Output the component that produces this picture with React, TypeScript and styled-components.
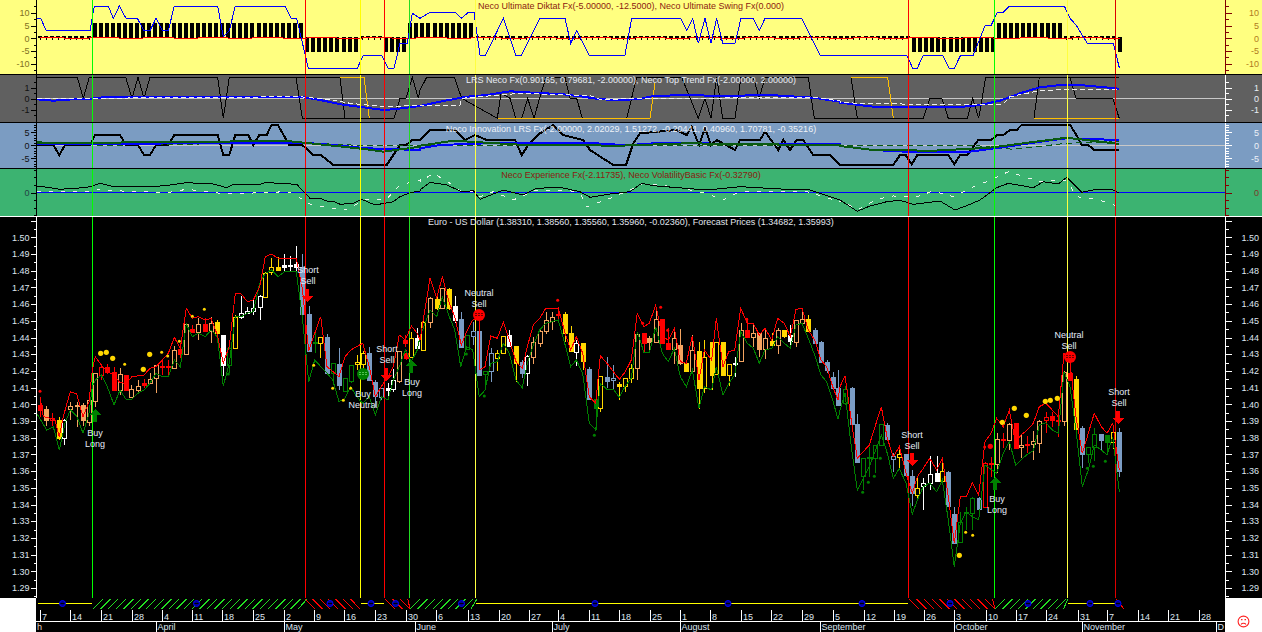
import React from "react"
import styled, { createGlobalStyle } from "styled-components"

type Pt = [number, number]
type Tick = { y: number; major?: boolean; label?: string }

const GlobalStyle = createGlobalStyle`
  html, body {
    margin: 0;
    padding: 0;
    background: #000;
    overflow: hidden;
  }
  text {
    font-family: "Liberation Sans", Arial, sans-serif;
    font-size: 9px;
  }
`

const Page = styled.div`
  display: flex;
  flex-direction: column;
  width: 1262px;
  height: 632px;
  overflow: hidden;
  font-family: "Liberation Sans", Arial, sans-serif;
`

const PaneRow = styled.section<{ $h: number; $bg: string; $edge?: string }>`
  display: flex;
  flex: none;
  box-sizing: border-box;
  height: ${(p) => p.$h + (p.$edge ? 1 : 0)}px;
  background: ${(p) => p.$bg};
  border-bottom: ${(p) => (p.$edge ? `1px solid ${p.$edge}` : "none")};
`

const AxisSvg = styled.svg`
  display: block;
  flex: none;
  width: 37px;
  height: 100%;
`

const PlotArea = styled.div`
  position: relative;
  flex: 1;
  min-width: 0;
`

const PlotSvg = styled.svg`
  display: block;
  width: 100%;
  height: 100%;
  shape-rendering: crispEdges;
`

const PaneTitle = styled.div<{ $color: string; $top: number }>`
  position: absolute;
  top: ${(p) => p.$top}px;
  left: 0;
  right: 0;
  text-align: center;
  font-size: 9px;
  line-height: 11px;
  white-space: nowrap;
  color: ${(p) => p.$color};
`

const BottomRow = styled.footer`
  display: flex;
  flex: none;
  height: 34px;
  background: #000;
`

const Corner = styled.div<{ $w: number }>`
  display: flex;
  flex: none;
  align-items: flex-end;
  justify-content: center;
  box-sizing: border-box;
  width: ${(p) => p.$w}px;
  padding-bottom: 4px;
  background: #fff;
`

const TimeStrip = styled.svg`
  display: block;
  flex: 1;
  min-width: 0;
  height: 100%;
`

const C = {
  r: "#ff0000",
  o: "#f4a460",
  y: "#ffd700",
  w: "#ffffff",
  s: "#7b9cc4",
  g: "#008000",
}

// everything below was traced off 3x crops, so points go through here
const traced = (ox: number, oy: number, pts: Pt[]): Pt[] =>
  pts.map(([x, y]) => [ox + x / 3, oy + y / 3])

const toPoints = (pts: Pt[]) =>
  pts.map(([x, y]) => `${x.toFixed(1)},${y.toFixed(1)}`).join(" ")

const Trace = ({ pts, color, w = 1, dash }: { pts: Pt[]; color: string; w?: number; dash?: string }) => (
  <polyline points={toPoints(pts)} fill="none" stroke={color} strokeWidth={w} strokeDasharray={dash} />
)

const SIGNALS: [number, string][] = [
  [92, "#00ff00"],
  [305, "#ff0000"],
  [360, "#ffff00"],
  [384, "#ff0000"],
  [409, "#22dd22"],
  [475, "#ffff40"],
  [908, "#ff0000"],
  [994, "#00ff00"],
  [1067, "#ffff40"],
  [1115, "#dd0000"],
]

const SignalLines = ({ top, height }: { top: number; height: number }) => (
  <>
    {SIGNALS.map(([x, color]) => (
      <line key={x} x1={x + 0.5} x2={x + 0.5} y1={top} y2={top + height} stroke={color} />
    ))}
  </>
)

const Axis = ({
  side,
  top,
  height,
  ticks,
  lineColor,
  labelColor,
}: {
  side: "left" | "right"
  top: number
  height: number
  ticks: Tick[]
  lineColor: string
  labelColor: string
}) => {
  const left = side === "left"
  const lineX = left ? 36.5 : 1225.5
  const origin = left ? 0 : 1225
  return (
    <AxisSvg viewBox={`${origin} ${top} 37 ${height}`}>
      <line x1={lineX} x2={lineX} y1={top} y2={top + height} stroke={lineColor} shapeRendering="crispEdges" />
      {ticks.map((t) => {
        const len = t.major ? 6 : 3
        const y = Math.round(t.y) + 0.5
        return (
          <React.Fragment key={t.y}>
            <line
              x1={lineX}
              x2={left ? lineX - len : lineX + len}
              y1={y}
              y2={y}
              stroke={lineColor}
              shapeRendering="crispEdges"
            />
            {t.label && (
              <text x={left ? 29.5 : 1259} y={t.y + 3.2} textAnchor="end" fill={labelColor}>
                {t.label}
              </text>
            )}
          </React.Fragment>
        )
      })}
    </AxisSvg>
  )
}

const buildTicks = (zero: number, perUnit: number, step: number, min: number, max: number, majorEvery: number, labelEvery: number, fmt = (v: number) => String(v)) => {
  const out: Tick[] = []
  const steps = Math.round((max - min) / step)
  for (let i = 0; i <= steps; i++) {
    const v = +(min + i * step).toFixed(4)
    const isMajor = Math.abs(v / majorEvery - Math.round(v / majorEvery)) < 1e-6
    const isLabel = labelEvery > 0 && Math.abs(v / labelEvery - Math.round(v / labelEvery)) < 1e-6
    out.push({ y: zero - v * perUnit, major: isMajor, label: isLabel ? fmt(v) : undefined })
  }
  return out
}

const yellowTicks = buildTicks(38.3, 2.55, 2.5, -12.5, 15, 5, 5).filter((t) => t.y >= 0 && t.y <= 74 && t.label !== "15")
const greyTicks = buildTicks(98.5, 11, 0.5, -2, 2, 1, 1).filter((t) => t.label !== "2" && t.label !== "-2")
const blueTicks = buildTicks(145.3, 2.6, 1, -8, 8, 5, 5)
const greenTicks = buildTicks(192.5, 7.6, 1, -3, 3, 3, 0).map((t) => (t.y === 192.5 ? { ...t, major: true, label: "0" } : { ...t, major: false }))
const priceTicks = buildTicks(237.3, 1670, 0.005, -0.215, 0.01, 0.01, 0.01)
  .map((t) => ({ ...t, label: t.label && t.y > 230 ? (1.5 + Number(t.label)).toFixed(2) : undefined }))
  .filter((t) => t.y > 218 && t.y < 597)

const HISTO_XS = Array.from({ length: 179 }, (_, i) => Math.round(40 + i * 6.07))

const histoState = (x: number) => {
  if (x > 92 && x < 304) return 1
  if (x > 305 && x < 359) return -1
  if (x > 385 && x < 408) return -1
  if (x > 409 && x < 475) return 1
  if (x > 908 && x < 994) return -1
  if (x > 994 && x < 1066) return 1
  if (x > 1116) return -1
  return 0
}

const Histogram = () => (
  <g>
    {HISTO_XS.map((x) => {
      const s = histoState(x)
      if (s === 1) return <rect key={x} x={x - 2} y={23} width={4} height={15} fill="#000" />
      if (s === -1) return <rect key={x} x={x - 2} y={37} width={4} height={15} fill="#000" />
      return (
        <g key={x} fill="#000">
          <rect x={x - 2} y={36} width={4} height={2} />
          <rect x={x} y={38} width={1} height={2} />
        </g>
      )
    })}
    <polyline
      points={HISTO_XS.map((x, i) => `${x},${38 + (i % 9 < 4 ? -1 : 0) + (i % 23 === 0 ? 1 : 0)}`).join(" ")}
      fill="none"
      stroke="#ff0000"
    />
  </g>
)

const swingBlue: Pt[] = [
  ...traced(0, 0, [[110,55],[122,55],[139,92],[270,92],[283,18],[325,18],[340,55],[358,18],[378,55],[412,55],[432,92],[450,92],[468,55],[487,92],[505,92],[523,18],[653,18],[670,110],[688,92],[706,18],[855,18],[873,55],[890,55],[925,205],[1072,205],[1090,165],[1145,165],[1165,205],[1182,205],[1200,130],[1222,130],[1237,40],[1260,55]]),
  ...traced(420, 0, [[0,55],[30,37],[105,37],[125,55],[145,37],[162,37],[180,165],[197,165],[250,55],[287,165],[305,165],[360,55],[435,55],[452,130],[470,92],[507,165],[615,165],[635,55],[782,55],[800,92],[818,55],[835,130],[855,55],[873,130],[890,55],[908,130],[945,130],[963,55],[1000,55],[1018,92],[1035,55],[1145,55],[1200,165],[1260,165]]),
  ...traced(840, 0, [[0,165],[200,165],[218,205],[232,205],[250,165],[308,165],[327,205],[343,205],[362,165],[400,165],[435,77],[453,77],[472,37],[490,37],[508,18],[673,18],[690,55],[708,75],[742,130],[820,130],[838,203]]),
]

const greyBlack: Pt[] = [
  ...traced(0, 0, [[110,232],[232,232],[250,295],[268,232],[377,232],[396,295],[414,232],[432,295],[450,232],[653,232],[670,355],[688,232],[888,232],[907,355],[1182,355],[1200,295],[1218,295],[1237,232],[1255,295]]),
  ...traced(420, 0, [[0,270],[20,232],[103,232],[125,295],[232,355],[243,280],[270,295],[287,355],[305,355],[323,295],[342,355],[360,290],[378,232],[435,232],[450,295],[470,295],[487,355],[620,355],[650,232],[785,232],[835,355],[855,295],[873,355],[890,232],[908,355],[945,355],[963,232],[1000,232],[1018,295],[1035,232],[1165,232],[1183,355],[1260,355]]),
  ...traced(840, 0, [[0,355],[250,355],[270,295],[305,295],[325,355],[382,355],[398,295],[416,355],[437,232],[838,232]]),
]
const greyBlack2 = traced(0, 0, [[890,232],[1020,232],[1035,355]])
const greyBlack3 = traced(840, 0, [[33,232],[52,355]])
const greyBlack4 = traced(840, 0, [[582,355],[598,232],[690,232],[708,295],[818,295],[838,355]])
const greyYellow = [
  traced(0, 0, [[1020,232],[1092,232],[1108,355]]),
  traced(420, 0, [[233,355],[690,355],[705,250]]),
  traced(840, 0, [[33,232],[143,232],[160,355]]),
  traced(840, 0, [[582,355],[838,355]]),
]
const greyBlue: Pt[] = [
  ...traced(0, 0, [[110,298],[160,302],[220,298],[270,296],[310,292],[400,290],[510,292],[660,290],[910,292],[960,300],[1030,314],[1090,322],[1150,330],[1180,328],[1260,318]]),
  ...traced(420, 0, [[0,318],[60,305],[140,290],[200,285],[270,274],[340,278],[430,283],[490,290],[540,298],[600,300],[660,297],[700,288],[800,285],[900,288],[1050,285],[1180,293],[1260,305]]),
  ...traced(840, 0, [[0,308],[100,320],[350,322],[420,315],[480,302],[540,280],[600,262],[660,255],[720,255],[838,266]]),
]
const greyDash: Pt[] = [
  ...traced(0, 0, [[110,296],[900,290],[1000,300],[1050,310],[1150,320],[1260,316]]),
  ...traced(420, 0, [[0,318],[120,315],[125,295],[240,285],[300,280],[510,287],[540,298],[660,296],[1180,292],[1260,303]]),
  ...traced(840, 0, [[0,306],[50,310],[240,313],[490,312],[510,290],[600,272],[700,268],[835,270]]),
]

const innovationBlack: Pt[] = [
  ...traced(0, 0, [[110,435],[160,435],[178,465],[195,435],[270,435],[285,405],[360,405],[378,435],[414,435],[432,465],[450,465],[468,435],[505,435],[523,405],[653,405],[670,465],[688,465],[706,405],[745,405],[760,435],[778,405],[800,405],[815,374],[833,374],[868,435],[907,435],[940,465],[963,465],[1000,495],[1160,495],[1200,435],[1218,435],[1237,420],[1260,420]]),
  ...traced(420, 0, [[0,420],[30,390],[105,390],[135,420],[165,405],[200,420],[285,420],[305,465],[325,435],[360,400],[400,375],[430,405],[490,420],[510,450],[580,495],[618,495],[640,430],[660,400],[770,390],[800,405],[815,380],[837,435],[855,385],[873,435],[890,420],[945,450],[960,420],[1020,420],[1035,395],[1075,450],[1090,420],[1110,450],[1130,420],[1150,420],[1180,465],[1230,465],[1260,495]]),
  ...traced(840, 0, [[0,495],[160,495],[180,465],[197,465],[215,493],[232,465],[325,465],[343,493],[360,465],[382,465],[415,420],[453,420],[472,405],[490,405],[510,390],[530,390],[545,374],[690,374],[712,410],[725,435],[745,435],[762,450],[838,450]]),
]
const innovationBlue: Pt[] = [
  ...traced(0, 0, [[110,433],[270,433],[700,428],[910,428],[1000,435],[1100,445],[1260,450]]),
  ...traced(420, 0, [[0,445],[60,435],[200,430],[500,428],[620,436],[700,430],[1260,432]]),
  ...traced(840, 0, [[0,438],[100,450],[230,457],[390,455],[500,440],[600,425],[680,415],[838,420]]),
]
const innovationGreen: Pt[] = [
  ...traced(0, 0, [[110,428],[300,428],[860,423],[1000,437],[1100,448],[1150,455],[1260,440]]),
  ...traced(420, 0, [[0,437],[100,422],[300,434],[600,437],[800,430],[1260,436]]),
  ...traced(840, 0, [[0,438],[100,450],[280,452],[450,443],[550,430],[680,413],[838,432]]),
]
const innovationDash: Pt[] = [
  ...traced(0, 0, [[110,425],[300,436],[900,428],[1100,437],[1260,436]]),
  ...traced(840, 0, [[0,436],[400,436],[520,448],[680,430],[838,425]]),
]

const experienceBlack: Pt[] = [
  ...traced(0, 0, [[110,560],[130,560],[180,568],[250,563],[270,560],[300,550],[340,560],[460,560],[510,555],[560,548],[640,552],[680,563],[700,553],[780,553],[800,547],[830,550],[890,553],[930,595],[960,595],[980,603],[1000,603],[1020,613],[1060,610],[1085,598],[1125,615],[1180,605],[1200,590],[1230,578],[1260,573]]),
  ...traced(420, 0, [[0,570],[30,547],[80,555],[125,575],[160,572],[180,598],[250,570],[310,585],[350,565],[420,562],[480,575],[510,592],[570,582],[630,575],[665,550],[700,557],[860,570],[960,560],[1100,568],[1170,570],[1260,600]]),
  ...traced(840, 0, [[0,600],[52,634],[90,618],[140,605],[180,601],[220,613],[300,603],[345,630],[380,617],[420,600],[470,563],[505,550],[580,563],[610,545],[655,552],[680,532],[725,577],[760,570],[815,568],[838,580]]),
]
const experienceWhite: Pt[] = [
  ...traced(0, 0, [[110,575],[270,575],[300,568],[340,572],[500,578],[560,568],[680,582],[860,575],[890,585],[920,610],[990,625],[1040,630],[1090,600],[1160,597],[1200,555],[1260,540]]),
  ...traced(420, 0, [[0,545],[40,520],[90,550],[125,575],[160,575],[180,590],[220,575],[280,600],[350,570],[440,570],[480,580],[500,620],[570,595],[630,570],[670,550],[760,560],[860,580],[910,600],[960,575],[1100,575],[1160,575],[1260,605]]),
  ...traced(840, 0, [[0,600],[52,630],[110,598],[160,588],[230,590],[280,573],[340,590],[400,560],[440,545],[505,515],[600,545],[680,540],[710,590],[770,598],[838,620]]),
]

const forecastRed: Pt[] = [
  ...traced(0, 220, [[121,535],[130,590],[150,595],[165,600],[178,650],[190,590],[211,515],[230,522],[249,590],[267,545],[277,450],[286,410],[304,435],[322,455],[342,465],[360,488],[378,490],[396,470],[432,465],[450,445],[468,440],[487,420],[505,400],[523,352],[541,385],[559,265],[577,295],[595,290],[616,300],[633,295],[652,345],[670,430],[688,378],[706,220],[724,222],[742,245],[760,240],[779,200],[796,110],[814,102],[835,115],[889,115],[907,205],[926,393],[944,340],[962,290],[981,440],[1017,470],[1035,410],[1052,390],[1088,370],[1108,440],[1126,530],[1144,500],[1164,470],[1180,440],[1198,345],[1216,360],[1234,318],[1252,340]]),
  ...traced(420, 260, [[0,240],[30,55],[50,115],[67,50],[88,130],[104,170],[124,255],[140,215],[158,180],[178,170],[178,330],[195,320],[212,228],[232,235],[250,187],[268,240],[288,305],[307,325],[322,260],[340,195],[359,175],[377,145],[415,145],[434,215],[452,270],[469,230],[488,280],[508,410],[527,430],[541,287],[561,310],[598,358],[616,335],[634,300],[652,160],[672,200],[688,190],[707,135],[727,230],[745,240],[763,205],[781,305],[799,310],[817,228],[837,360],[853,270],[875,300],[889,175],[909,320],[926,275],[944,270],[962,145],[982,190],[1000,190],[1018,225],[1035,205],[1055,240],[1073,175],[1093,190],[1111,230],[1128,148],[1146,145],[1165,210],[1184,240],[1203,300],[1220,320],[1238,380],[1254,420]]),
  ...traced(840, 320, [[0,200],[15,168],[35,310],[52,415],[88,375],[124,260],[142,355],[160,410],[178,380],[198,460],[217,520],[232,470],[250,445],[269,415],[290,450],[307,415],[325,530],[343,670],[361,530],[379,530],[397,488],[416,525],[435,365],[453,340],[470,295],[490,320],[508,270],[527,370],[543,345],[562,330],[580,310],[598,260],[617,250],[637,270],[655,290],[672,100],[690,130],[708,290],[727,400],[745,340],[763,280],[784,320],[801,340],[818,310],[838,450]]),
]

const forecastGreen: Pt[] = [
  ...traced(0, 220, [[110,580],[140,630],[160,620],[178,690],[195,610],[211,570],[231,590],[249,640],[267,580],[277,500],[286,480],[304,465],[322,500],[342,555],[360,510],[378,538],[396,538],[414,520],[432,510],[450,490],[468,460],[487,470],[505,470],[523,420],[541,440],[559,312],[577,350],[595,340],[616,350],[633,330],[652,350],[670,498],[688,430],[706,290],[724,290],[742,280],[760,275],[779,190],[796,160],[814,150],[835,170],[853,155],[889,155],[907,290],[926,485],[944,420],[981,460],[998,480],[1017,545],[1035,535],[1052,500],[1070,530],[1088,550],[1108,530],[1126,585],[1144,530],[1164,540],[1180,480],[1198,440],[1216,390],[1234,425],[1252,390]]),
  ...traced(420, 260, [[0,230],[30,150],[50,170],[67,110],[88,170],[104,210],[122,320],[140,260],[158,270],[178,410],[195,390],[212,310],[232,305],[250,250],[268,280],[288,360],[307,383],[322,310],[340,255],[359,210],[377,190],[415,180],[434,250],[452,320],[469,300],[488,340],[508,490],[527,510],[541,370],[561,388],[580,388],[598,412],[616,378],[634,355],[652,215],[672,278],[688,278],[707,200],[727,280],[745,305],[763,265],[781,350],[799,380],[817,330],[837,445],[853,380],[875,390],[889,320],[909,405],[926,370],[944,345],[962,215],[982,250],[1000,265],[1018,310],[1035,270],[1055,265],[1073,230],[1093,250],[1111,265],[1128,195],[1146,190],[1165,235],[1184,285],[1203,345],[1220,365],[1238,420],[1254,478]]),
  ...traced(840, 320, [[0,270],[15,220],[35,390],[52,510],[88,440],[124,345],[142,400],[160,475],[178,445],[198,490],[217,583],[232,540],[250,500],[269,490],[290,515],[307,480],[325,600],[343,740],[361,610],[379,575],[397,590],[416,600],[435,435],[470,460],[490,400],[508,365],[527,435],[543,420],[562,403],[580,392],[598,315],[617,308],[637,330],[655,340],[672,155],[690,200],[708,330],[727,500],[745,450],[763,375],[784,390],[801,405],[818,350],[838,515]]),
]

// x, bodyTop, bodyBottom, wickTop, wickBottom, colour, filled
type Bar = [number, number, number, number, number, keyof typeof C, 0 | 1]
const BARS: Bar[] = [
  [40,405,410,397,417,"r",1],[46,409,420,406,426,"o",1],[52,418,420,413,426,"r",0],[59,420,438,417,440,"y",1],[64,420,438,419,445,"w",0],[70,406,409,402,420,"o",0],[77,405,406,402,427,"o",0],[83,405,420,403,426,"o",1],[89,400,422,393,426,"o",0],
  [95,373,401,373,407,"o",0],[101,367,375,364,380,"r",0],[107,367,372,364,374,"r",1],[114,372,390,367,390,"r",1],[120,374,390,368,395,"o",0],[126,375,390,375,390,"r",1],[131,389,397,385,398,"o",0],[138,386,390,380,393,"o",0],[144,383,385,379,388,"r",1],[150,379,383,373,383,"o",0],
  [156,365,378,365,393,"o",0],[162,366,367,360,375,"r",0],[168,366,367,360,377,"r",0],[174,350,368,346,368,"o",0],[180,349,354,345,358,"r",1],[186,324,354,323,355,"o",0],[192,329,332,325,333,"r",1],[198,324,332,318,340,"o",0],[205,324,331,318,332,"r",1],[211,323,331,317,343,"o",0],
  [217,322,333,320,337,"y",1],[223,335,365,335,376,"w",1],[229,348,365,345,373,"g",0],[235,317,348,315,348,"y",0],[241,313,317,296,319,"w",0],[247,311,313,307,313,"w",0],[253,308,311,300,315,"w",0],[260,296,307,295,320,"w",0],[265,273,297,272,297,"y",0],[271,267,272,258,275,"y",0],
  [278,267,270,257,271,"y",1],[284,265,267,254,272,"w",1],[290,265,266,256,272,"w",0],[296,264,267,246,277,"w",1],[302,267,314,254,314,"s",1],[309,314,351,306,351,"s",1],[315,342,343,333,353,"g",0],[320,337,343,337,358,"y",0],[327,337,373,334,373,"s",1],[333,363,373,363,383,"g",0],
  [339,364,385,348,390,"s",1],[345,378,391,378,391,"g",0],[351,365,381,365,383,"g",0],[357,362,364,355,370,"y",0],[363,353,364,351,372,"y",0],[369,353,380,347,380,"s",1],[375,382,396,380,407,"s",1],[381,388,397,388,400,"s",0],[388,388,390,383,400,"w",1],[393,380,389,369,392,"w",0],
  [399,351,381,351,383,"o",0],[405,340,343,335,347,"r",1],[406,353,358,350,360,"r",1],[411,338,357,332,357,"y",0],[417,338,348,328,348,"w",1],
  [423,322,350,320,351,"y",0],[430,298,322,297,328,"o",0],[437,299,308,295,310,"y",1],[442,288,308,288,309,"o",0],[449,289,308,288,310,"y",1],[455,306,320,296,323,"w",1],[461,319,347,312,347,"s",1],[467,335,349,335,350,"g",0],[473,331,336,322,345,"s",0],[479,331,375,330,375,"s",1],
  [485,371,374,371,387,"g",0],[491,353,371,348,382,"s",0],[497,353,358,350,371,"y",0],[503,336,353,336,354,"y",0],[509,335,346,330,346,"w",1],[516,346,363,346,382,"y",1],[522,362,373,360,378,"s",1],[527,356,373,355,386,"w",0],[533,342,357,337,364,"o",0],[540,331,343,328,347,"o",0],
  [546,320,331,312,334,"o",0],[552,317,321,312,330,"o",0],[558,314,315,307,320,"r",1],[565,314,333,312,342,"y",1],[571,333,351,326,351,"y",1],[576,343,352,340,366,"w",0],[583,343,361,343,370,"y",1],[589,369,399,367,400,"s",1],[596,399,408,399,430,"g",1],[600,376,408,376,412,"y",0],
  [607,377,381,357,388,"s",1],[613,378,380,365,390,"s",0],[619,384,386,382,400,"y",1],[625,378,386,378,392,"y",0],[631,368,378,364,383,"y",0],[637,334,368,333,380,"o",0],[644,333,343,333,352,"r",1],[649,338,342,336,353,"o",1],[656,319,342,308,343,"o",0],[662,319,343,319,343,"r",1],
  [668,343,349,328,349,"r",1],[674,338,349,327,364,"o",0],[680,345,363,329,365,"o",1],[686,363,371,362,371,"y",1],[692,350,371,335,372,"o",0],[699,351,388,342,409,"y",1],[704,357,388,340,393,"y",0],[712,342,375,342,390,"y",1],[716,342,374,342,375,"y",0],[723,342,375,342,375,"y",1],
  [729,364,375,364,386,"y",0],[735,363,364,357,377,"w",0],[741,330,361,323,361,"o",0],[747,330,337,318,337,"r",1],[753,333,337,323,347,"o",0],[759,333,349,333,357,"o",1],[765,338,349,328,359,"o",0],[772,341,345,333,345,"y",1],[778,330,345,328,354,"o",0],[784,330,336,330,338,"y",1],
  [790,335,341,325,348,"w",1],[796,320,342,320,347,"o",0],[802,319,323,308,323,"o",0],[808,319,331,315,331,"y",1],[815,330,343,328,343,"s",1],[821,342,362,341,362,"s",1],[827,362,370,360,373,"s",1],[833,377,388,372,388,"s",1],[838,388,405,370,405,"s",1],
  [845,389,403,386,405,"g",0],[852,388,424,387,424,"s",1],[857,424,462,414,462,"s",1],[863,458,476,458,490,"g",0],[869,457,458,447,477,"g",0],[875,445,458,445,473,"g",0],[881,424,445,424,446,"g",0],[887,425,439,423,439,"s",1],[893,456,459,453,472,"s",0],[899,454,457,448,470,"y",0],
  [906,454,475,454,476,"s",1],[912,476,493,470,506,"s",1],[917,488,495,477,500,"y",0],[923,483,486,478,510,"w",0],[930,474,483,456,490,"w",0],[937,473,481,456,482,"w",1],[942,471,481,460,481,"y",0],[948,472,506,471,506,"s",1],[954,514,543,507,543,"s",1],[960,522,542,512,542,"g",0],
  [966,512,513,507,530,"g",0],[972,498,513,497,530,"g",0],[979,498,509,497,509,"s",1],[985,463,507,462,507,"r",0],[991,463,464,457,477,"r",0],[997,439,464,433,473,"o",0],[1003,439,440,433,448,"r",1],[1009,424,440,423,450,"o",0],[1016,423,448,423,449,"r",1],[1021,445,447,434,458,"o",0],
  [1027,444,445,436,453,"r",1],[1033,441,444,431,460,"o",0],[1039,421,443,420,453,"o",0],[1046,417,420,412,433,"r",0],[1052,416,420,412,427,"r",1],[1058,420,421,412,437,"r",0],[1064,372,421,371,426,"o",0],[1070,373,380,353,380,"r",1],[1076,379,429,376,430,"y",1],[1082,428,454,426,468,"s",1],
  [1088,447,454,447,463,"g",0],[1094,434,447,428,461,"g",0],[1101,434,440,434,451,"s",1],[1107,435,442,435,455,"g",1],[1113,432,442,431,449,"y",0],[1119,432,471,428,477,"s",1],
]

const Candles = () => (
  <g>
    {BARS.map(([x, top, bot, wt, wb, tone, filled]) => {
      const color = C[tone]
      return (
        <g key={`${x}-${top}`}>
          <line x1={x + 0.5} x2={x + 0.5} y1={wt} y2={wb} stroke={color} />
          <rect x={x - 1.5} y={top + 0.5} width={4} height={Math.max(bot - top, 1)} fill={filled ? color : "#000"} stroke={color} />
        </g>
      )
    })}
  </g>
)

const dots = (ox: number, oy: number, r: number, color: string, pts: Pt[]) =>
  traced(ox, oy, pts).map(([x, y]) => ({ x, y, r, color }))

const DOTS = [
  ...dots(0, 220, 2.6, "#ffd700", [[302,400],[319,397],[338,415],[430,448],[449,403]]),
  ...dots(0, 220, 1.5, "#ffd700", [[374,433],[485,397],[503,408],[538,364],[577,289],[613,268],[941,436],[998,505],[1030,541],[1052,505]]),
  ...dots(0, 220, 1.5, "#ff0000", [[120,514]]),
  ...dots(0, 220, 1.5, "#008000", [[685,462]]),
  ...dots(420, 260, 1.5, "#ff0000", [[413,121],[722,142],[668,190],[743,211],[980,178]]),
  ...dots(420, 260, 1.5, "#008000", [[139,282],[193,408],[523,526]]),
  ...dots(840, 320, 1.5, "#008000", [[68,517],[85,487],[103,469],[121,415],[742,445],[760,439],[796,424]]),
  ...dots(840, 320, 1.5, "#ffd700", [[377,637],[398,646]]),
  ...dots(840, 320, 2.6, "#ffd700", [[358,706],[487,307],[523,265],[559,286],[616,244],[631,241],[652,235]]),
  ...dots(840, 320, 2.6, "#ff0000", [[451,379]]),
  ...dots(840, 320, 1.5, "#ff0000", [[434,381]]),
]

const UpArrow = ({ x, y }: { x: number; y: number }) => (
  <polygon points={`${x},${y} ${x + 6},${y + 6} ${x + 2},${y + 6} ${x + 2},${y + 13} ${x - 2},${y + 13} ${x - 2},${y + 6} ${x - 6},${y + 6}`} fill="#008000" />
)

const DownArrow = ({ x, y }: { x: number; y: number }) => (
  <polygon points={`${x - 2},${y} ${x + 2},${y} ${x + 2},${y + 7} ${x + 6},${y + 7} ${x},${y + 13} ${x - 6},${y + 7} ${x - 2},${y + 7}`} fill="#ff0000" />
)

const NeutralMark = ({ x, y, color, bar }: { x: number; y: number; color: string; bar: string }) => (
  <g>
    <circle cx={x} cy={y} r={6} fill={color} style={{ shapeRendering: "auto" }} />
    <line x1={x - 4} x2={x + 4} y1={y - 1.5} y2={y - 1.5} stroke={bar} strokeDasharray="2 1" />
    <line x1={x - 4} x2={x + 4} y1={y + 0.5} y2={y + 0.5} stroke={bar} strokeDasharray="2 1" />
  </g>
)

const SIGNAL_LABELS: [number, number, string, string][] = [
  [95, 436, "Buy", "Long"],
  [308, 273, "Short", "Sell"],
  [363, 397, "Buy", "Neutral"],
  [387, 352, "Short", "Sell"],
  [412, 385, "Buy", "Long"],
  [479, 296, "Neutral", "Sell"],
  [912, 438, "Short", "Sell"],
  [997, 502, "Buy", "Long"],
  [1069, 338, "Neutral", "Sell"],
  [1119, 395, "Short", "Sell"],
]

const SignalLabels = () => (
  <g fill="#e4ecfa" textAnchor="middle">
    {SIGNAL_LABELS.map(([x, y, first, second]) => (
      <React.Fragment key={x}>
        <text x={x} y={y}>{first}</text>
        <text x={x} y={y + 11}>{second}</text>
      </React.Fragment>
    ))}
  </g>
)

const DAYS: [number, string][] = [
  [40,"7"],[70,"14"],[101,"21"],[132,"28"],[162,"4"],[192,"11"],[222,"18"],[253,"25"],[284,"2"],[314,"9"],[344,"16"],[375,"23"],[406,"30"],[436,"6"],[468,"13"],[499,"20"],[529,"27"],[558,"4"],[589,"11"],[619,"18"],[650,"25"],[680,"1"],[710,"8"],[741,"15"],[771,"22"],[802,"29"],[833,"5"],[864,"12"],[894,"19"],[924,"26"],[954,"3"],[986,"10"],[1016,"17"],[1046,"24"],[1078,"31"],[1107,"7"],[1138,"14"],[1168,"21"],[1199,"28"],
]

const MONTHS: [number, string][] = [
  [156,"April"],[284,"May"],[415,"June"],[552,"July"],[680,"August"],[820,"September"],[954,"October"],[1082,"November"],[1216,"D"],
]

const HATCHES: [number, number, string, 1 | -1][] = [
  [93, 305, "#22dd22", 1],
  [305, 358, "#ff0000", -1],
  [385, 408, "#ff0000", -1],
  [410, 475, "#22dd22", 1],
  [909, 993, "#ff0000", -1],
  [995, 1066, "#22dd22", 1],
  [1116, 1122, "#ff0000", -1],
]

const YELLOW_RUNS: [number, number][] = [[38, 92], [361, 384], [476, 908], [1068, 1115]]
const STRIP_MARKS = [62.5, 196.5, 330, 371, 395.5, 461.5, 595, 728, 862, 950, 1028, 1090, 1118]

const Hatch = ({ from, to, color, dir }: { from: number; to: number; color: string; dir: 1 | -1 }) => {
  const lines: number[] = []
  for (let x = from; x < to; x += 7.6) lines.push(x)
  return (
    <g stroke={color} shapeRendering="crispEdges">
      {lines.map((x) => (
        <line
          key={x}
          x1={x}
          y1={dir === 1 ? 609 : 599}
          x2={Math.min(x + 10, to + 2)}
          y2={dir === 1 ? 599 : 609}
        />
      ))}
    </g>
  )
}

const Strip = () => (
  <TimeStrip viewBox="36 598 1189 34">
    {HATCHES.map(([from, to, color, dir]) => (
      <Hatch key={from} from={from} to={to} color={color} dir={dir} />
    ))}
    {YELLOW_RUNS.map(([from, to]) => (
      <line key={from} x1={from} x2={to} y1={603.5} y2={603.5} stroke="#ffff00" shapeRendering="crispEdges" />
    ))}
    {STRIP_MARKS.map((x) => (
      <g key={x}>
        <circle cx={x} cy={603.5} r={3} fill="#000090" stroke="#0000ff" />
        <line x1={x - 2} x2={x + 2} y1={603.5} y2={603.5} stroke="#000" />
      </g>
    ))}
    {DAYS.map(([x, day]) => (
      <React.Fragment key={x}>
        <line x1={x + 0.5} x2={x + 0.5} y1={610} y2={621} stroke="#fff" shapeRendering="crispEdges" />
        <text x={x + 2} y={620} fill="#dfe6f0">{day}</text>
      </React.Fragment>
    ))}
    <line x1={36} x2={1225} y1={621.5} y2={621.5} stroke="#fff" shapeRendering="crispEdges" />
    <text x={37} y={630} fill="#e8d8c0">h</text>
    {MONTHS.map(([x, month]) => (
      <React.Fragment key={x}>
        <line x1={x + 0.5} x2={x + 0.5} y1={622} y2={632} stroke="#fff" shapeRendering="crispEdges" />
        <text x={x + 1.5} y={630} fill="#dfe6f0">{month}</text>
      </React.Fragment>
    ))}
  </TimeStrip>
)

const SadFace = () => (
  <svg width="13" height="13" viewBox="0 0 13 13" fill="none" stroke="#f22" strokeWidth="1.1">
    <circle cx="6.5" cy="6.5" r="5.4" />
    <path d="M4 9.5c1-1.6 4-1.6 5 0" />
    <path d="M4 4.6h1.5M7.5 4.6H9" />
  </svg>
)

const Pane = ({
  top,
  height,
  bg,
  edge,
  left,
  right,
  children,
}: {
  top: number
  height: number
  bg: string
  edge?: string
  left: { ticks: Tick[]; line: string; label: string }
  right: { ticks: Tick[]; line: string; label: string }
  children: React.ReactNode
}) => (
  <PaneRow $h={height} $bg={bg} $edge={edge}>
    <Axis side="left" top={top} height={height} ticks={left.ticks} lineColor={left.line} labelColor={left.label} />
    <PlotArea>{children}</PlotArea>
    <Axis side="right" top={top} height={height} ticks={right.ticks} lineColor={right.line} labelColor={right.label} />
  </PaneRow>
)

export default function App() {
  return (
    <Page>
      <GlobalStyle />
      <Pane
        top={0}
        height={74}
        bg="#ffff80"
        edge="#000"
        left={{ ticks: yellowTicks, line: "#000", label: "#80701f" }}
        right={{ ticks: yellowTicks, line: "#800000", label: "#b07a20" }}
      >
        <PlotSvg viewBox="37 0 1188 74">
          <Histogram />
          <Trace pts={swingBlue} color="#0000ff" />
          <SignalLines top={0} height={74} />
        </PlotSvg>
        <PaneTitle $color="#8b1a10" $top={1}>
          Neco Ultimate Diktat Fx(-5.00000, -12.5000), Neco Ultimate Swing Fx(0.000)
        </PaneTitle>
      </Pane>

      <Pane
        top={75}
        height={47}
        bg="#606060"
        edge="#000"
        left={{ ticks: greyTicks, line: "#000", label: "#111" }}
        right={{ ticks: greyTicks, line: "#fff", label: "#e8eef5" }}
      >
        <PlotSvg viewBox="37 75 1188 47">
          <line x1={37} x2={1225} y1={98.5} y2={98.5} stroke="#c8c8c8" />
          <Trace pts={greyBlack} color="#000" />
          <Trace pts={greyBlack2} color="#000" />
          <Trace pts={greyBlack3} color="#000" />
          <Trace pts={greyBlack4} color="#000" />
          {greyYellow.map((pts, i) => (
            <Trace key={i} pts={pts} color="#ffc000" />
          ))}
          <Trace pts={greyBlue} color="#0000ff" w={2} />
          <Trace pts={greyDash} color="#f0f0f0" dash="5 3" />
          <SignalLines top={75} height={47} />
        </PlotSvg>
        <PaneTitle $color="#e8edf5" $top={0}>
          LRS Neco Fx(0.90165, 0.79681, -2.00000), Neco Top Trend Fx(-2.00000, 2.00000)
        </PaneTitle>
      </Pane>

      <Pane
        top={123}
        height={45}
        bg="#7b9cc2"
        edge="#000"
        left={{ ticks: blueTicks, line: "#000", label: "#111" }}
        right={{ ticks: blueTicks, line: "#fff", label: "#eef2f8" }}
      >
        <PlotSvg viewBox="37 123 1188 45">
          <line x1={37} x2={1225} y1={145.5} y2={145.5} stroke="#c8c8c8" />
          <Trace pts={innovationBlack} color="#000" w={2} />
          <Trace pts={innovationDash} color="#0a5a12" dash="6 4" />
          <Trace pts={innovationBlue} color="#0000ff" w={2} />
          <Trace pts={innovationGreen} color="#0a5a12" w={2} />
          <SignalLines top={123} height={45} />
        </PlotSvg>
        <PaneTitle $color="#eef2f8" $top={1}>
          Neco Innovation LRS Fx(-2.00000, 2.02029, 1.51272, -0.20441, 0.40960, 1.70781, -0.35216)
        </PaneTitle>
      </Pane>

      <Pane
        top={169}
        height={47}
        bg="#3cb371"
        edge="#fff"
        left={{ ticks: greenTicks, line: "#000", label: "#244" }}
        right={{ ticks: greenTicks, line: "#800000", label: "#7a3a2a" }}
      >
        <PlotSvg viewBox="37 169 1188 47">
          <line x1={37} x2={1225} y1={192.5} y2={192.5} stroke="#0000ff" />
          <Trace pts={experienceWhite} color="#eef5ee" dash="4 8" />
          <Trace pts={experienceBlack} color="#000" />
          <SignalLines top={169} height={47} />
        </PlotSvg>
        <PaneTitle $color="#8b1a10" $top={1}>
          Neco Experience Fx(-2.11735), Neco VolatilityBasic Fx(-0.32790)
        </PaneTitle>
      </Pane>

      <Pane
        top={217}
        height={381}
        bg="#000"
        left={{ ticks: priceTicks, line: "#fff", label: "#dfe6f0" }}
        right={{ ticks: priceTicks, line: "#fff", label: "#dfe6f0" }}
      >
        <PlotSvg viewBox="37 217 1188 381">
          <SignalLines top={217} height={381} />
          <Candles />
          <Trace pts={forecastGreen} color="#008000" />
          <Trace pts={forecastRed} color="#ff0000" />
          {DOTS.map((d) => (
            <circle key={`${d.x}-${d.y}`} cx={d.x} cy={d.y} r={d.r} fill={d.color} style={{ shapeRendering: "auto" }} />
          ))}
          <UpArrow x={95} y={409} />
          <DownArrow x={307} y={289} />
          <NeutralMark x={363} y={374} color="#008000" bar="#50c050" />
          <DownArrow x={386} y={368} />
          <UpArrow x={411} y={360} />
          <NeutralMark x={479} y={315} color="#ff0000" bar="#700000" />
          <DownArrow x={912} y={453} />
          <UpArrow x={995} y={477} />
          <NeutralMark x={1070} y={357} color="#ff0000" bar="#700000" />
          <DownArrow x={1118} y={411} />
          <SignalLabels />
        </PlotSvg>
        <PaneTitle $color="#e0e6ee" $top={0}>
          Euro - US Dollar (1.38310, 1.38560, 1.35560, 1.35960, -0.02360), Forecast Prices (1.34682, 1.35993)
        </PaneTitle>
      </Pane>

      <BottomRow>
        <Corner $w={36} />
        <Strip />
        <Corner $w={37}>
          <SadFace />
        </Corner>
      </BottomRow>
    </Page>
  )
}
